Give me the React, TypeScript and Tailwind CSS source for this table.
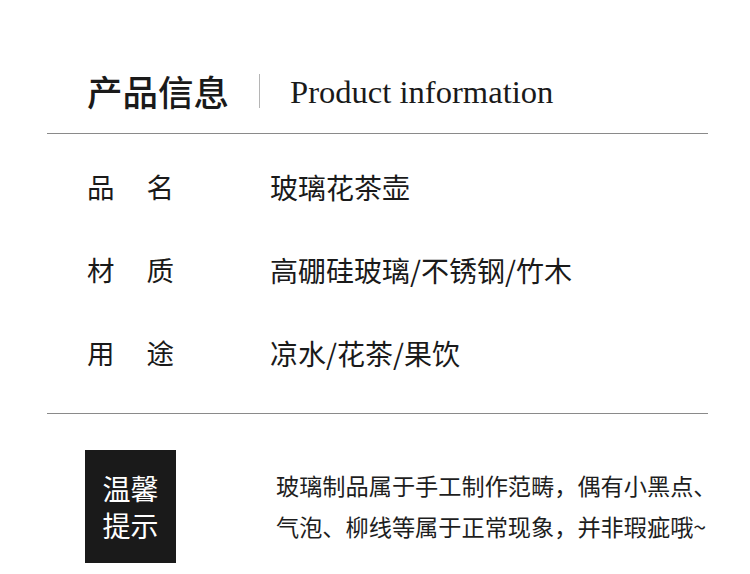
const cjk = "font-['Noto_Sans_CJK_SC',sans-serif]"

const rows = [
  { a: '品', b: '名', value: '玻璃花茶壶' },
  { a: '材', b: '质', value: '高硼硅玻璃/不锈钢/竹木' },
  { a: '用', b: '途', value: '凉水/花茶/果饮' },
]

export default function App() {
  return (
    <div className={`w-[750px] h-[574px] bg-white overflow-hidden text-[#1a1a1a] ${cjk}`}>
      <div className="ml-[47px] mr-[42px]">
        {/* Title */}
        <div className="mt-[56px] mb-[7px] h-[70px] flex items-center pl-[40px]">
          <h1 className="text-[35.5px] leading-none font-medium">产品信息</h1>
          <div className="mx-[30px] w-px h-[34px] bg-[#b5b5b5]" />
          <span className="text-[32.6px] leading-none font-['Liberation_Serif',serif] mt-[2px]">Product information</span>
        </div>
        <div className="h-px bg-[#8a8a8a]" />

        {/* Spec rows */}
        <div className="pt-[11px] pb-[19px]">
          {rows.map(r => (
            <div key={r.a} className="h-[83px] flex items-center pl-[40px]">
              <div className="w-[183px] flex gap-[32px] text-[27.5px] leading-none">
                <span>{r.a}</span>
                <span>{r.b}</span>
              </div>
              <span className="text-[28px] leading-none">{r.value}</span>
            </div>
          ))}
        </div>
        <div className="h-px bg-[#8a8a8a]" />

        {/* Tips */}
        <div className="mt-[36px] flex items-center pl-[38px]">
          <div className="shrink-0 w-[91px] h-[113px] bg-[#1a1a1a] text-white text-[28px] leading-[37px] flex flex-col items-center justify-center">
            <span>温馨</span>
            <span>提示</span>
          </div>
          <div className="ml-[100px] -mt-[2px] text-[23.2px] leading-[41px] text-[#1e1e1e] whitespace-nowrap">
            <p>玻璃制品属于手工制作范畴，偶有小黑点、</p>
            <p>气泡、柳线等属于正常现象，并非瑕疵哦~</p>
          </div>
        </div>
      </div>
    </div>
  )
}
